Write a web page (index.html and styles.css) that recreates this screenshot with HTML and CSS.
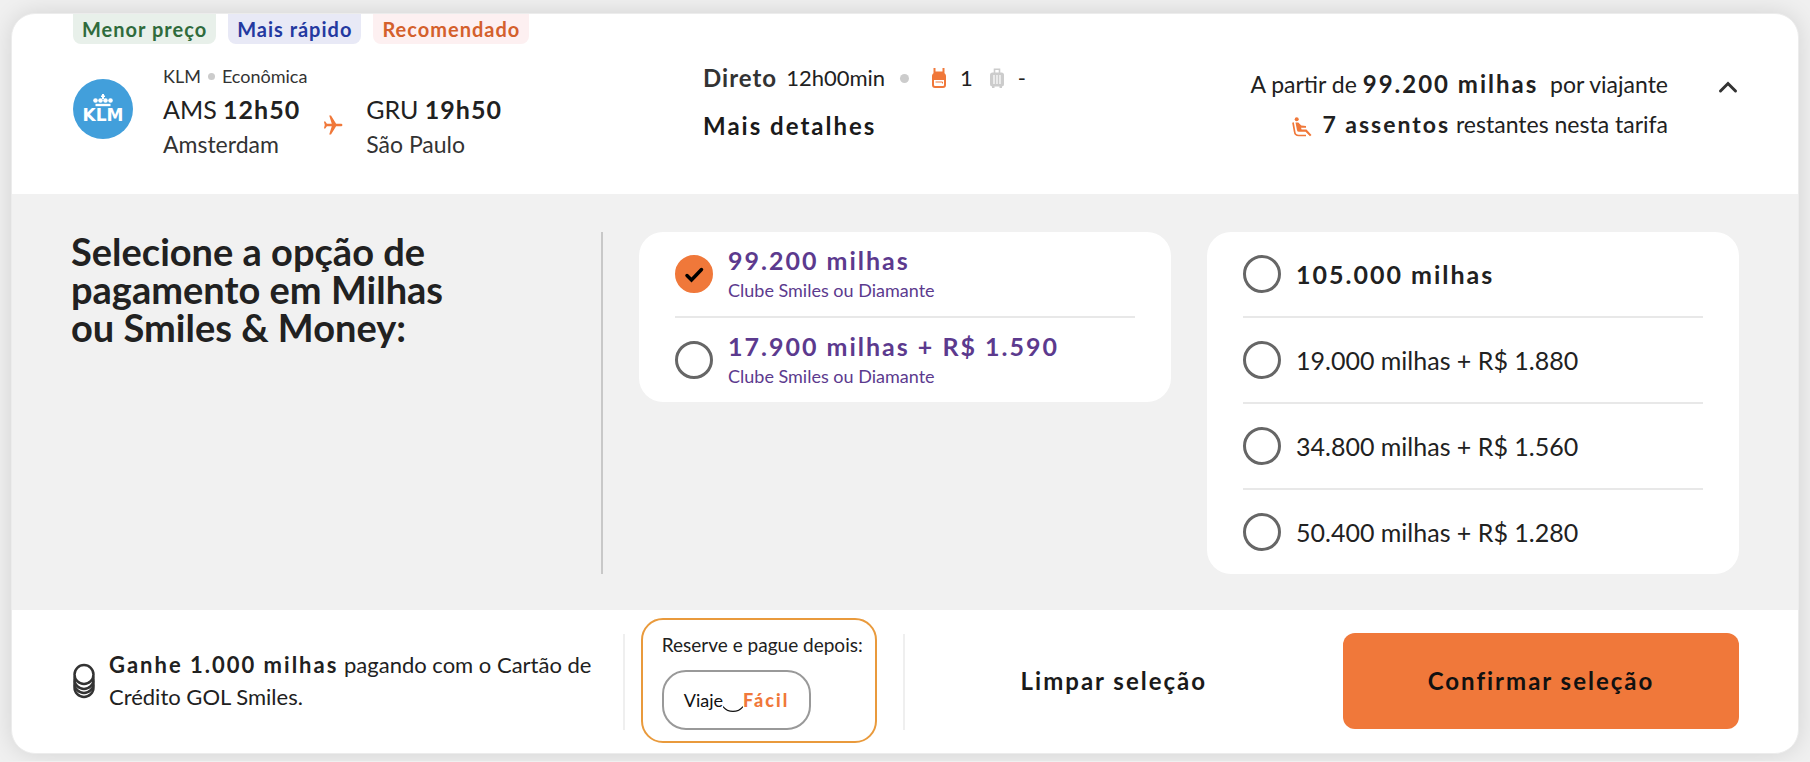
FILE: index.html
```html
<!DOCTYPE html>
<html lang="pt-BR">
<head>
  <meta charset="UTF-8" />
  <title>Smiles - Seleção de voo</title>
  <meta name="viewport" content="width=device-width, initial-scale=1.0" />
  <link rel="stylesheet" href="styles.css">
</head>
<body>
  <main class="voo">
    <ul class="selos">
      <li class="selo selo-preco">Menor preço</li>
      <li class="selo selo-rapido">Mais rápido</li>
      <li class="selo selo-recomendado">Recomendado</li>
    </ul>

    <header class="resumo">
      <div class="trajeto">
        <svg class="logo" viewBox="0 0 60 60" role="img" aria-label="KLM">
          <circle cx="30" cy="30" r="30" fill="#429fdb" />
          <g fill="#fff">
            <rect x="29" y="15" width="2" height="5" />
            <rect x="28" y="16.5" width="4" height="1.5" />
            <circle cx="22.5" cy="21.500" r="2.3" />
            <circle cx="27.5" cy="21.5" r="2.3" />
            <circle cx="32.5" cy="21.5" r="2.3" />
            <circle cx="37.5" cy="21.5" r="2.3" />
            <rect x="22.5" y="24.8" width="15" height="2.4" />
          </g>
          <text x="30" y="42" class="logo-texto">KLM</text>
        </svg>
        <div>
          <p class="cia">KLM <span class="ponto"></span> Econômica</p>
          <div class="rota">
            <div>
              <p class="hora">AMS <strong>12h50</strong></p>
              <p class="cidade">Amsterdam</p>
            </div>
            <svg class="aviao" viewBox="0 0 18 18" aria-hidden="true">
              <path d="M17.5 9c0-.8-.7-1.2-1.5-1.2h-4.2L7.2.5H5.6l2.3 7.3H3.5L2.1 5.9H.8L1.6 9l-.8 3.1h1.3l1.4-1.9h4.4l-2.3 7.3h1.6l4.6-7.3H16c.8 0 1.5-.4 1.5-1.2z" fill="#f0783a" />
            </svg>
            <div>
              <p class="hora">GRU <strong>19h50</strong></p>
              <p class="cidade">São Paulo</p>
            </div>
          </div>
        </div>
      </div>

      <div class="detalhes">
        <div class="duracao">
          <strong>Direto</strong>
          <span>12h00min</span>
          <span class="ponto ponto-grande"></span>
          <span class="bagagem">
            <svg width="14" height="20" viewBox="0 0 14 20" aria-hidden="true">
              <path d="M1.5 0h2v3.5h7V0h2v5.3c.9.7 1.5 1.7 1.5 3V17a3 3 0 0 1-3 3H3a3 3 0 0 1-3-3V8.3c0-1.3.6-2.3 1.5-3z" fill="#f0783a" />
              <path d="M2 12h10v5a1 1 0 0 1-1 1H3a1 1 0 0 1-1-1z" fill="#fff" />
              <path d="M3.5 14h7v1.5" fill="none" stroke="#f0783a" />
            </svg>
            1
          </span>
          <span class="bagagem">
            <svg width="14" height="20" viewBox="0 0 14 20" aria-hidden="true">
              <path d="M4.5 5V1.2h5V5" fill="none" stroke="#ccc" stroke-width="1.6" />
              <rect y="4.5" width="14" height="14" rx="2.5" fill="#ccc" />
              <path d="M2 18h2.5v2H2zM9.5 18H12v2H9.5z" fill="#ccc" />
              <path d="M4 7v9M7 7v9M10 7v9" stroke="#fff" stroke-width="1.2" />
            </svg>
            -
          </span>
        </div>
        <button type="button" class="mais">Mais detalhes</button>
      </div>

      <div class="preco">
        <p>A partir de <strong class="preco-valor">99.200 milhas</strong>&nbsp; por viajante</p>
        <p>
          <svg class="assento" viewBox="0 0 20 20" aria-hidden="true">
            <circle cx="4.7" cy="2.3" r="2" fill="#f0783a" />
            <path d="M3.5 5.5h2.8l3 3L14 9v1.8H9l.6 1.7h4.9l5 5.5-1.5 1.3-4.5-4.5H7a2 2 0 0 1-2-1.6z" fill="#f0783a" />
            <path d="M1 5.5l1.6 9a4.3 4.3 0 0 0 4.2 4H14" fill="none" stroke="#f0783a" stroke-width="1.7" />
          </svg>
          <strong>7 assentos</strong> restantes nesta tarifa
        </p>
      </div>

      <button type="button" class="fechar" aria-label="Fechar detalhes">
        <svg width="20" height="14" viewBox="0 0 20 14" aria-hidden="true">
          <path d="M2.5 10L10 2.5l7.5 7.5" fill="none" stroke="#333" stroke-width="3" stroke-linecap="round" />
        </svg>
      </button>
    </header>

    <section class="pagamento">
      <div class="titulo">
        <h2>Selecione a opção de<br>pagamento em Milhas<br>ou Smiles &amp; Money:</h2>
      </div>

      <div class="opcoes opcoes-clube">
        <label class="opcao">
          <input type="radio" name="tarifa" checked>
          <span><strong>99.200 milhas</strong><small>Clube Smiles ou Diamante</small></span>
        </label>
        <label class="opcao">
          <input type="radio" name="tarifa">
          <span><strong>17.900 milhas + R$ 1.590</strong><small>Clube Smiles ou Diamante</small></span>
        </label>
      </div>

      <div class="opcoes">
        <label class="opcao">
          <input type="radio" name="tarifa">
          <strong>105.000 milhas</strong>
        </label>
        <label class="opcao">
          <input type="radio" name="tarifa">
          <span>19.000 milhas + R$ 1.880</span>
        </label>
        <label class="opcao">
          <input type="radio" name="tarifa">
          <span>34.800 milhas + R$ 1.560</span>
        </label>
        <label class="opcao">
          <input type="radio" name="tarifa">
          <span>50.400 milhas + R$ 1.280</span>
        </label>
      </div>
    </section>

    <footer class="rodape">
      <div class="ganhe">
        <svg width="22" height="36" viewBox="0 0 22 36" aria-hidden="true">
          <g fill="#fff" stroke="#333" stroke-width="2.5">
            <circle cx="11" cy="24.5" r="9.5" />
            <circle cx="11" cy="20.5" r="9.5" />
            <circle cx="11" cy="16.5" r="9.5" />
            <circle cx="11" cy="11.5" r="9.5" />
          </g>
        </svg>
        <p><strong>Ganhe 1.000 milhas</strong> pagando com o Cartão de Crédito GOL Smiles.</p>
      </div>

      <div class="reserve">
        <div class="reserve-caixa">
          <p>Reserve e pague depois:</p>
          <button type="button" class="viaje">
            Viaje<svg width="20" height="8" viewBox="0 0 20 8" aria-hidden="true">
              <path d="M0 1.5c5 6.500 15 6.500 20 0" fill="none" stroke="#111" stroke-width="1.2" />
            </svg><strong>Fácil</strong>
          </button>
        </div>
      </div>

      <button type="button" class="limpar">Limpar seleção</button>
      <button type="button" class="confirmar">Confirmar seleção</button>
    </footer>
  </main>
</body>
</html>
```
FILE: styles.css
```css
* {
  box-sizing: border-box;
}

body {
  margin: 0;
  padding: 13px 11px 7px;
  background: #f0f0f0;
  color: #212121;
  font-family: Lato, "Open Sans", sans-serif;
  font-size: 23px;
}

p, h2, ul {
  margin: 0;
  padding: 0;
}

button {
  border: none;
  padding: 0;
  background: none;
  font-family: inherit;
  font-size: 24px;
  font-weight: bold;
  letter-spacing: 2px;
  color: #1a1a1a;
  cursor: pointer;
}

strong {
  letter-spacing: 2px;
}

.voo {
  background: white;
  border: 1px solid #ececec;
  border-radius: 24px;
  box-shadow: 0 0 24px rgba(0,0,0,0.12);
  overflow: hidden;
}

.selos {
  display: flex;
  gap: 12px;
  padding: 0 61px;
  list-style: none;
}

.selo {
  height: 30px;
  padding: 0 9px;
  border-radius: 0 0 8px 8px;
  font-size: 20px;
  line-height: 30px;
  font-weight: bold;
  letter-spacing: 1px;
}

.selo-preco {
  background: #e8f0ea;
  color: #2f6b3c;
}

.selo-rapido {
  background: #e8e9f6;
  color: #2439a0;
}

.selo-recomendado {
  background: #fdf0f1;
  color: #d4602c;
}

.resumo {
  display: grid;
  grid-template-columns: 37% 1fr auto auto;
  padding: 18px 60px 34px 61px;
}

.trajeto {
  display: flex;
  gap: 30px;
}

.logo {
  width: 60px;
  height: 60px;
  margin-top: 17px;
}

.logo-texto {
  font-family: "DejaVu Sans", sans-serif;
  font-size: 17px;
  font-weight: bold;
  fill: white;
  text-anchor: middle;
}

.cia {
  display: flex;
  align-items: center;
  gap: 7px;
  font-size: 18px;
  line-height: 28px;
  color: #333;
}

.ponto {
  width: 7px;
  height: 7px;
  border-radius: 50%;
  background: #ccc;
}

.ponto-grande {
  width: 9px;
  height: 9px;
  margin: 0 14px 0 6px;
}

.rota {
  display: flex;
  align-items: center;
  gap: 23px;
}

.hora {
  font-size: 25px;
  line-height: 38px;
}

.hora strong {
  letter-spacing: 1px;
}

.cidade {
  line-height: 32px;
  color: #333;
}

.aviao {
  width: 20px;
  height: 20px;
}

.detalhes {
  padding-left: 14px;
}

.duracao {
  display: flex;
  align-items: center;
  gap: 9px;
  font-size: 22px;
  line-height: 32px;
}

.duracao strong {
  font-size: 24px;
  letter-spacing: 1px;
  color: #333;
}

.bagagem {
  display: flex;
  align-items: center;
  gap: 14px;
  margin-right: 8px;
}

.mais {
  margin-top: 16px;
  line-height: 32px;
}

.preco {
  padding-top: 2px;
  line-height: 40px;
  text-align: right;
}

.preco-valor {
  font-size: 24px;
}

.assento {
  width: 20px;
  height: 20px;
  margin-right: 4px;
  vertical-align: middle;
}

.fechar {
  height: 46px;
  margin-left: 50px;
}

.pagamento {
  display: grid;
  grid-template-columns: 1fr 1fr 1fr;
  align-items: start;
  gap: 36px;
  padding: 38px 59px 36px;
  background: #f1f1f1;
}

.titulo {
  align-self: stretch;
  border-right: 2px solid #c8c8c8;
}

.titulo h2 {
  font-size: 38px;
  line-height: 38px;
}

.opcoes {
  padding: 0 36px;
  border-radius: 24px;
  background: white;
}

.opcao {
  display: flex;
  align-items: center;
  gap: 15px;
  height: 84px;
  font-size: 25px;
  cursor: pointer;
}

.opcao + .opcao {
  height: 86px;
  border-top: 2px solid #e8e8e8;
}

.opcao input {
  appearance: none;
  flex: none;
  width: 38px;
  height: 38px;
  margin: 0;
  border: 3px solid #666;
  border-radius: 50%;
}

.opcao input:checked {
  border-color: #f0783a;
  background: #f0783a url("data:image/svg+xml,%3Csvg xmlns='http://www.w3.org/2000/svg' viewBox='0 0 32 32'%3E%3Cpath d='M9 17.5l4.500 4.500 10-10.500' fill='none' stroke='black' stroke-width='3.500' stroke-linecap='round'/%3E%3C/svg%3E") center no-repeat;
}

.opcoes-clube {
  color: #5c3a8e;
}

.opcoes-clube strong,
.opcoes-clube small {
  display: block;
}

.opcoes-clube strong {
  line-height: 32px;
}

.opcoes-clube small {
  font-size: 18px;
  line-height: 28px;
}

.rodape {
  display: grid;
  grid-template-columns: 33% auto 1fr 396px;
  align-items: center;
  padding: 8px 59px 10px 61px;
}

.ganhe {
  display: flex;
  align-items: center;
  gap: 14px;
  padding-right: 12px;
  font-size: 22px;
  line-height: 32px;
}

.ganhe svg {
  flex: none;
}

.reserve {
  position: relative;
  padding: 0 28px 0 18px;
}

/* linhas divisórias dos dois lados da caixa */
.reserve::before,
.reserve::after {
  content: "";
  position: absolute;
  top: 16px;
  bottom: 13px;
  width: 2px;
  background: #efefef;
}

.reserve::before {
  left: 0;
}

.reserve::after {
  right: 0;
}

.reserve-caixa {
  padding: 10px 12px 11px 19px;
  border: 2px solid #e99a3c;
  border-radius: 22px;
  font-size: 19px;
}

.reserve-caixa p {
  line-height: 30px;
}

.viaje {
  display: flex;
  align-items: center;
  height: 60px;
  margin-top: 10px;
  padding: 0 20px;
  border: 2px solid #999;
  border-radius: 24px;
  font-size: 18px;
  font-weight: normal;
  letter-spacing: normal;
  color: #111;
}

.viaje svg {
  margin-top: 18px;
}

.viaje strong {
  font-weight: 900;
  letter-spacing: 2px;
  color: #f0783a;
}

.limpar {
  justify-self: center;
  margin-right: 20px;
}

.confirmar {
  height: 96px;
  border-radius: 12px;
  background: #f0783a;
  color: #111;
}
```
